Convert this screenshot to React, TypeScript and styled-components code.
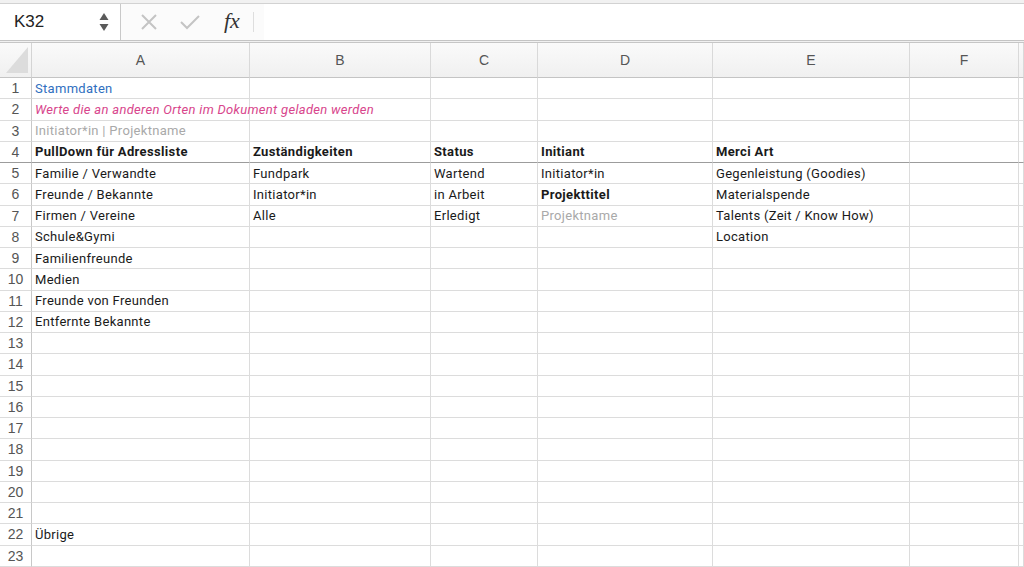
import styled, { createGlobalStyle } from 'styled-components';

type Tone = 'normal' | 'link' | 'note' | 'muted';

interface cellData {
  text: string;
  bold?: boolean;
  tone?: Tone;
}

const COLUMNS = ['A', 'B', 'C', 'D', 'E', 'F', 'G'];
const ROW_COUNT = 23;

// sparse sheet content, keyed by row then column index
const sheet: Record<number, Record<number, cellData>> = {
  1: { 0: { text: 'Stammdaten', tone: 'link' } },
  2: { 0: { text: 'Werte die an anderen Orten im Dokument geladen werden', tone: 'note' } },
  3: { 0: { text: 'Initiator*in | Projektname', tone: 'muted' } },
  4: {
    0: { text: 'PullDown für Adressliste', bold: true },
    1: { text: 'Zuständigkeiten', bold: true },
    2: { text: 'Status', bold: true },
    3: { text: 'Initiant', bold: true },
    4: { text: 'Merci Art', bold: true },
  },
  5: {
    0: { text: 'Familie / Verwandte' },
    1: { text: 'Fundpark' },
    2: { text: 'Wartend' },
    3: { text: 'Initiator*in' },
    4: { text: 'Gegenleistung (Goodies)' },
  },
  6: {
    0: { text: 'Freunde / Bekannte' },
    1: { text: 'Initiator*in' },
    2: { text: 'in Arbeit' },
    3: { text: 'Projekttitel', bold: true },
    4: { text: 'Materialspende' },
  },
  7: {
    0: { text: 'Firmen / Vereine' },
    1: { text: 'Alle' },
    2: { text: 'Erledigt' },
    3: { text: 'Projektname', tone: 'muted' },
    4: { text: 'Talents (Zeit / Know How)' },
  },
  8: { 0: { text: 'Schule&Gymi' }, 4: { text: 'Location' } },
  9: { 0: { text: 'Familienfreunde' } },
  10: { 0: { text: 'Medien' } },
  11: { 0: { text: 'Freunde von Freunden' } },
  12: { 0: { text: 'Entfernte Bekannte' } },
  22: { 0: { text: 'Übrige' } },
};

const toneColor: Record<Tone, string> = {
  normal: '#1a1a1a',
  link: '#2f6fc0',
  note: '#d8458c',
  muted: '#a9a9a9',
};

export default function App() {
  const rows = Array.from({ length: ROW_COUNT }, (_, i) => i + 1);

  return (
    <>
      <GlobalStyle />
      <Window>
        <Toolbar>
          <NameBox>
            <NameText>K32</NameText>
            <Stepper>
              <svg width="10" height="22" viewBox="0 0 10 22">
                <path d="M5 2 L9.5 9 L0.5 9 Z" fill="#5a5a5a" />
                <path d="M5 20 L9.5 13 L0.5 13 Z" fill="#5a5a5a" />
              </svg>
            </Stepper>
          </NameBox>
          <Actions>
            <CancelIcon>
              <svg width="18" height="18" viewBox="0 0 18 18">
                <path d="M2 2 L16 16 M16 2 L2 16" stroke="#c4c4c4" strokeWidth="2" />
              </svg>
            </CancelIcon>
            <ConfirmIcon>
              <svg width="22" height="18" viewBox="0 0 22 18">
                <path d="M2 9 L8 15 L20 3" stroke="#c4c4c4" strokeWidth="2" fill="none" />
              </svg>
            </ConfirmIcon>
            <FxLabel>fx</FxLabel>
            <Separator />
          </Actions>
          <FormulaInput />
        </Toolbar>

        <Grid>
          <Corner>
            <svg width="22" height="26" viewBox="0 0 22 26">
              <path d="M22 0 L22 26 L0 26 Z" fill="#dcdcdc" />
            </svg>
          </Corner>
          {COLUMNS.map((col) => (
            <ColumnHeader key={col}>{col === 'G' ? '' : col}</ColumnHeader>
          ))}

          {rows.map((row) => (
            <Row key={row}>
              <RowHeader $ruled={row === 4}>{row}</RowHeader>
              {COLUMNS.map((col, idx) => {
                const cell = sheet[row]?.[idx];
                return (
                  <Cell
                    key={col}
                    $ruled={row === 4}
                    $bold={cell?.bold}
                    $tone={cell?.tone ?? 'normal'}
                    $italic={cell?.tone === 'note'}
                  >
                    {cell?.text}
                  </Cell>
                );
              })}
            </Row>
          ))}
        </Grid>
      </Window>
    </>
  );
}

const GlobalStyle = createGlobalStyle`
  html, body {
    margin: 0;
    padding: 0;
    background: #ffffff;
    overflow: hidden;
  }
  * {
    box-sizing: border-box;
  }
`;

const Window = styled.div`
  width: 1024px;
  height: 567px;
  overflow: hidden;
  background: #f1f1f1;
  font-family: 'Liberation Sans', Arial, sans-serif;
`;

const Toolbar = styled.div`
  display: flex;
  height: 38px;
  margin-top: 3px;
  border-top: 1px solid #d2d2d2;
  border-bottom: 1px solid #c4c4c4;
  background: #fbfbfb;
`;

const NameBox = styled.div`
  display: flex;
  align-items: center;
  justify-content: space-between;
  width: 121px;
  padding: 0 11px 0 14px;
  background: #ffffff;
  border-right: 1px solid #c9c9c9;
`;

const NameText = styled.span`
  font-family: 'Liberation Sans', Arial, sans-serif;
  font-size: 17px;
  color: #222;
`;

const Stepper = styled.div`
  display: flex;
  align-items: center;
`;

const Actions = styled.div`
  display: flex;
  align-items: center;
  padding-left: 19px;
`;

const CancelIcon = styled.div`
  display: flex;
  align-items: center;
  width: 18px;
`;

const ConfirmIcon = styled.div`
  display: flex;
  align-items: center;
  width: 22px;
  margin-left: 21px;
`;

const FxLabel = styled.span`
  font-family: 'Liberation Serif', 'Times New Roman', serif;
  font-style: italic;
  font-size: 22px;
  color: #333;
  margin-left: 23px;
  line-height: 1;
  padding-bottom: 3px;
`;

const Separator = styled.div`
  width: 1px;
  height: 20px;
  background: #dedede;
  margin-left: 13px;
`;

const FormulaInput = styled.div`
  flex: 1;
  margin-left: 10px;
  background: #ffffff;
`;

const Grid = styled.div`
  display: grid;
  grid-template-columns: 32px 218px 181px 107px 175px 197px 109px 1fr;
  grid-template-rows: 35px;
  grid-auto-rows: 21.25px;
  margin-top: 1px;
  border-top: 1px solid #c6c6c6;
  background: #ffffff;
`;

const Row = styled.div`
  display: contents;
`;

const Corner = styled.div`
  display: flex;
  align-items: flex-end;
  justify-content: flex-end;
  padding: 0 3px 4px 0;
  background: linear-gradient(#fafafa, #f0f0f0);
  border-right: 1px solid #d4d4d4;
  border-bottom: 1px solid #c4c4c4;
`;

const ColumnHeader = styled.div`
  display: flex;
  align-items: center;
  justify-content: center;
  font-size: 14px;
  color: #555;
  background: linear-gradient(#fafafa, #f0f0f0);
  border-right: 1px solid #d9d9d9;
  border-bottom: 1px solid #c4c4c4;
`;

const RowHeader = styled.div<{ $ruled?: boolean }>`
  display: flex;
  align-items: center;
  justify-content: center;
  font-size: 14px;
  color: #555;
  background: #ffffff;
  border-right: 1px solid #c8c8c8;
  border-bottom: 1px solid ${({ $ruled }) => ($ruled ? '#9c9c9c' : '#dcdcdc')};
`;

const Cell = styled.div<{ $ruled?: boolean; $bold?: boolean; $italic?: boolean; $tone: Tone }>`
  display: flex;
  align-items: center;
  padding-left: 3px;
  white-space: nowrap;
  font-family: Roboto, 'Liberation Sans', sans-serif;
  font-size: 13px;
  letter-spacing: ${({ $bold }) => ($bold ? '0.35px' : '0.3px')};
  font-weight: ${({ $bold }) => ($bold ? 700 : 400)};
  font-style: ${({ $italic }) => ($italic ? 'italic' : 'normal')};
  color: ${({ $tone }) => toneColor[$tone]};
  border-right: 1px solid #dcdcdc;
  border-bottom: 1px solid ${({ $ruled }) => ($ruled ? '#9c9c9c' : '#dcdcdc')};
  position: relative;
  z-index: ${({ children }) => (children ? 1 : 0)};
`;
